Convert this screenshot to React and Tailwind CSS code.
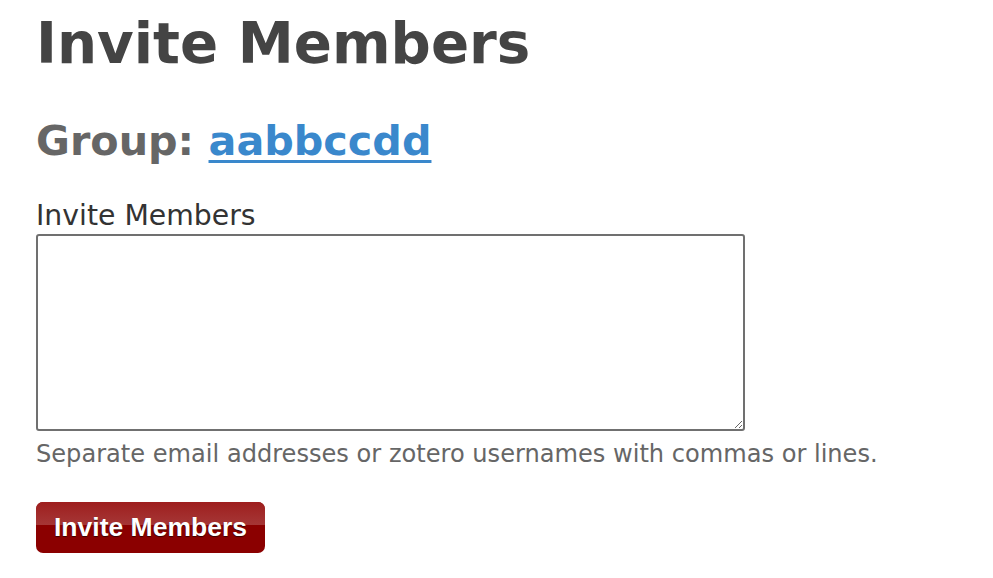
export default function App() {
  return (
    <div className="bg-white min-h-[578px] px-9 pt-3 font-['DejaVu_Sans',Verdana,sans-serif]">
      <h1 className="text-[56.3px] leading-[64px] font-bold text-[#444]">Invite Members</h1>

      <h2 className="mt-[40px] text-[41.3px] leading-[50px] font-bold text-[#666]">
        Group:{' '}
        <a href="#" className="text-[#3a88cc] underline decoration-[3px] underline-offset-[5px]">
          aabbccdd
        </a>
      </h2>

      <form className="mt-[33px]" onSubmit={e => e.preventDefault()}>
        <label className="block text-[28.3px] leading-[34px] text-[#333]">Invite Members</label>
        <textarea
          className="block w-[709px] h-[197px] mt-[1px] border-2 border-[#707070] rounded-[3px] bg-white outline-none"
        />
        <p className="mt-[8px] text-[24.1px] leading-[30px] text-[#666]">
          Separate email addresses or zotero usernames with commas or lines.
        </p>

        <button
          type="submit"
          className="mt-[33px] relative overflow-hidden h-[51px] px-[18px] rounded-[7px] bg-[#8b0000] font-['Liberation_Sans',Arial,sans-serif] font-bold text-[26.5px] text-white [text-shadow:0_1px_1px_rgba(0,0,0,0.6)]"
        >
          <span className="absolute inset-x-0 top-0 h-[23px] bg-gradient-to-b from-[#9e1d1d] to-[#a53636]" />
          <span className="relative">Invite Members</span>
        </button>
      </form>
    </div>
  );
}
